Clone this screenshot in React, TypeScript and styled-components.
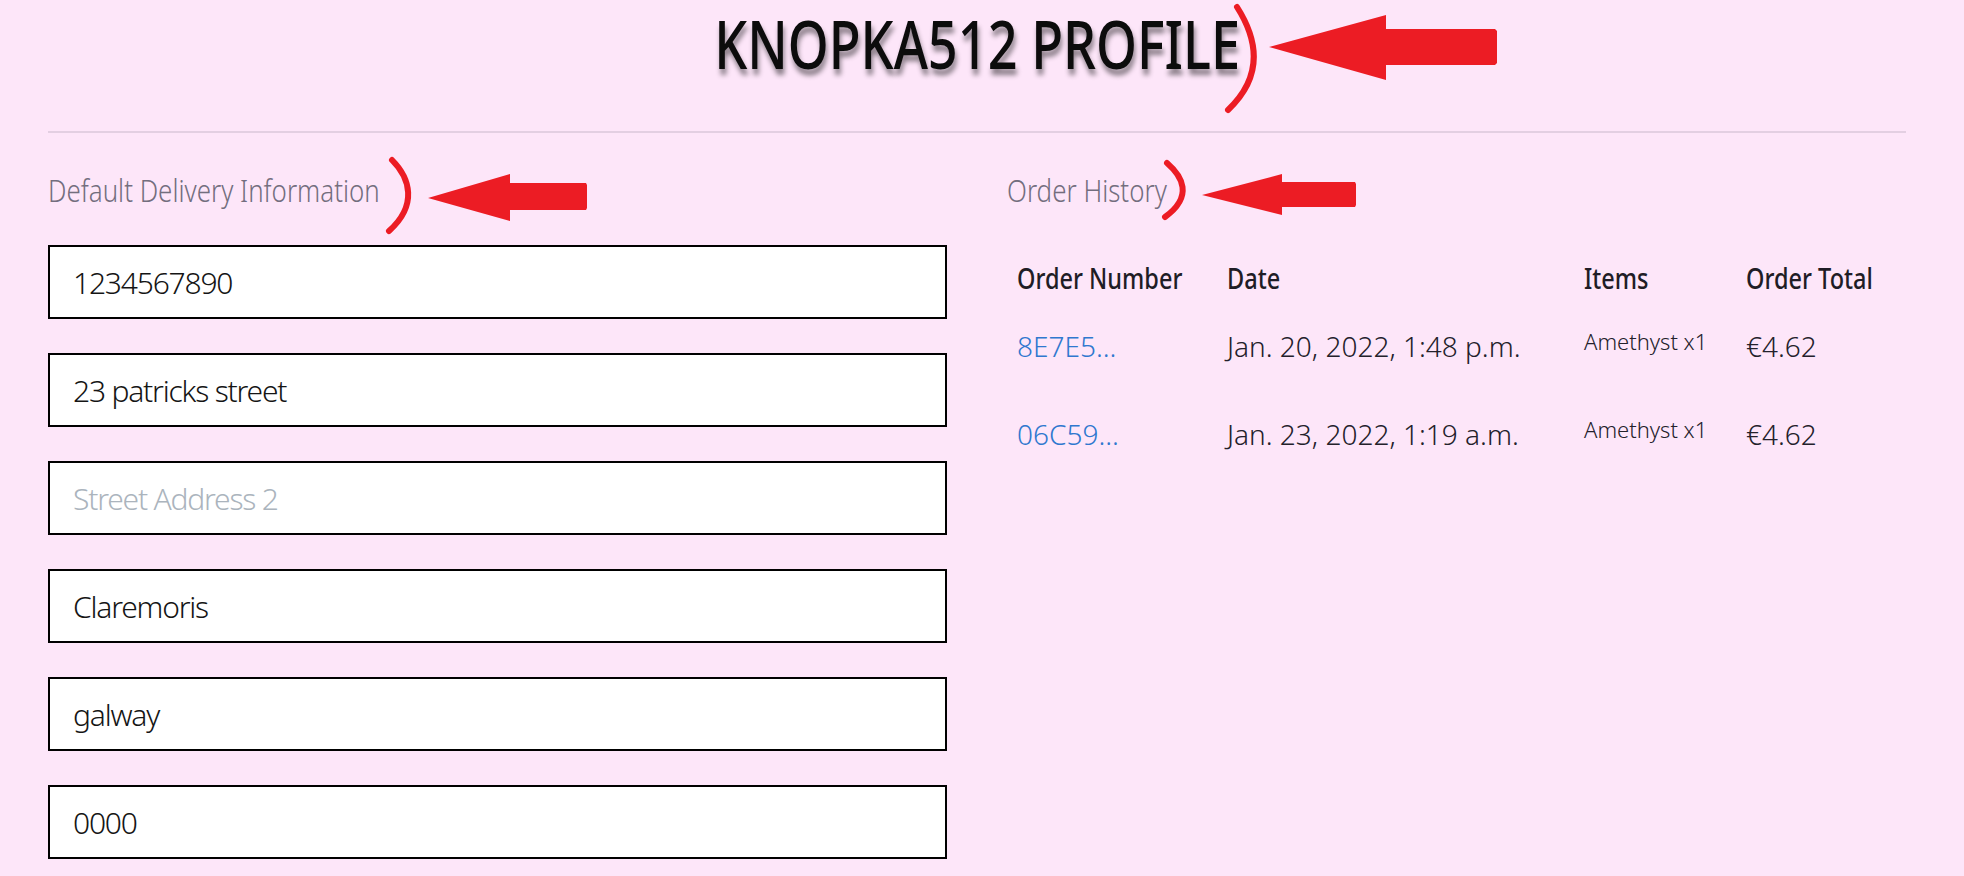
import React from "react";
import styled, { createGlobalStyle } from "styled-components";

const deliveryFields = [
  { name: "phone", value: "1234567890", placeholder: "Phone Number" },
  { name: "street1", value: "23 patricks street", placeholder: "Street Address 1" },
  { name: "street2", value: "", placeholder: "Street Address 2" },
  { name: "town", value: "Claremoris", placeholder: "Town or City" },
  { name: "county", value: "galway", placeholder: "County" },
  { name: "postcode", value: "0000", placeholder: "Postcode" },
];

const orders = [
  { number: "8E7E5...", date: "Jan. 20, 2022, 1:48 p.m.", items: "Amethyst x1", total: "€4.62" },
  { number: "06C59...", date: "Jan. 23, 2022, 1:19 a.m.", items: "Amethyst x1", total: "€4.62" },
];

const headings = ["Order Number", "Date", "Items", "Order Total"];

const App: React.FC = () => {
  return (
    <Page>
      <GlobalStyle />
      <TitleBar>
        <Title>KNOPKA512 PROFILE</Title>
      </TitleBar>
      <Columns>
        <Column>
          <SectionLabel>Default Delivery Information</SectionLabel>
          <Form>
            {deliveryFields.map((f) => (
              <Field key={f.name} name={f.name} defaultValue={f.value} placeholder={f.placeholder} />
            ))}
          </Form>
        </Column>
        <Column>
          <SectionLabel>Order History</SectionLabel>
          <OrderTable>
            <colgroup>
              <col style={{ width: 210 }} />
              <col style={{ width: 357 }} />
              <col style={{ width: 162 }} />
              <col style={{ width: 170 }} />
            </colgroup>
            <thead>
              <tr>
                {headings.map((h) => (
                  <HeadCell key={h}>
                    <HeadText>{h}</HeadText>
                  </HeadCell>
                ))}
              </tr>
            </thead>
            <tbody>
              {orders.map((o) => (
                <tr key={o.number}>
                  <Cell>
                    <OrderLink href="#">{o.number}</OrderLink>
                  </Cell>
                  <Cell>{o.date}</Cell>
                  <Cell small>{o.items}</Cell>
                  <Cell>{o.total}</Cell>
                </tr>
              ))}
            </tbody>
          </OrderTable>
        </Column>
      </Columns>

      {/* red hand-drawn annotations over the screenshot */}
      <Annotations viewBox="0 0 1964 876" width="1964" height="876">
        <g fill="none" stroke="#ec1c24" strokeWidth="6" strokeLinecap="round">
          <path d="M1237 7 C1258 40 1264 76 1228 110" />
          <path d="M392 160 C410 178 418 205 389 231" />
          <path d="M1167 163 C1182 176 1194 196 1165 217" />
        </g>
        <g fill="#ec1c24">
          <polygon points="1269,47 1386,15 1386,29 1495,29 1497,31 1497,63 1495,65 1386,65 1386,80" />
          <polygon points="428,198 510,174 510,183 586,183 587,185 587,208 586,210 510,210 510,221" />
          <polygon points="1202,195 1282,174 1282,182 1355,182 1356,184 1356,205 1355,207 1282,207 1282,215" />
        </g>
      </Annotations>
    </Page>
  );
};

export default App;

// ------------------ Styled Components ------------------

const GlobalStyle = createGlobalStyle`
  body {
    margin: 0;
    background: #fde6f9;
    font-family: "Noto Sans", "DejaVu Sans", sans-serif;
  }
`;

const Page = styled.div`
  position: relative;
  min-height: 876px;
  padding: 0 58px 0 48px;
  box-sizing: border-box;
  overflow: hidden;
`;

const TitleBar = styled.header`
  height: 133px;
  box-sizing: border-box;
  padding-top: 10px;
  display: flex;
  justify-content: center;
  border-bottom: 2px solid #e3cfe2;
`;

// narrow title: the original face is a condensed one
const Title = styled.h1`
  margin: 0;
  white-space: nowrap;
  font-size: 67px;
  line-height: 67px;
  font-weight: 500;
  color: #0c0c0c;
  transform: scaleX(0.78);
  transform-origin: center;
  text-shadow: 2px 6px 6px rgba(0, 0, 0, 0.45);
`;

const Columns = styled.main`
  display: grid;
  grid-template-columns: 1fr 1fr;
  column-gap: 60px;
  padding-top: 38px;
`;

const Column = styled.section`
  display: flex;
  flex-direction: column;
`;

const SectionLabel = styled.h2`
  margin: 0;
  font-size: 32px;
  line-height: 38px;
  font-weight: 300;
  color: #736e7e;
  transform: scaleX(0.81);
  transform-origin: left center;
`;

const Form = styled.form`
  display: flex;
  flex-direction: column;
  gap: 34px;
  margin-top: 36px;
`;

const Field = styled.input`
  height: 74px;
  box-sizing: border-box;
  border: 2px solid #000;
  border-radius: 0;
  background: #fff;
  padding: 0 23px;
  font-family: inherit;
  font-weight: 300;
  font-size: 30px;
  letter-spacing: -1.2px;
  color: #151515;
  outline: none;

  &::placeholder {
    color: #abb4bd;
  }
`;

const OrderTable = styled.table`
  margin-top: 36px;
  width: 100%;
  table-layout: fixed;
  border-collapse: collapse;
`;

const HeadCell = styled.th`
  padding: 12px 10px;
  text-align: left;
  white-space: nowrap;
  font-size: 28px;
  line-height: 42px;
  font-weight: 500;
  color: #1f1d26;
`;

const HeadText = styled.span`
  display: inline-block;
  transform: scaleX(0.84);
  transform-origin: left center;
`;

const Cell = styled.td<{ small?: boolean }>`
  padding: 14px 10px 32px;
  vertical-align: top;
  white-space: nowrap;
  font-size: ${({ small }) => (small ? "22px" : "28px")};
  line-height: ${({ small }) => (small ? "33px" : "42px")};
  font-weight: 300;
  color: #23212b;
`;

const OrderLink = styled.a`
  color: #2f78cf;
  text-decoration: none;
`;

const Annotations = styled.svg`
  position: absolute;
  top: 0;
  left: 0;
  pointer-events: none;
`;
